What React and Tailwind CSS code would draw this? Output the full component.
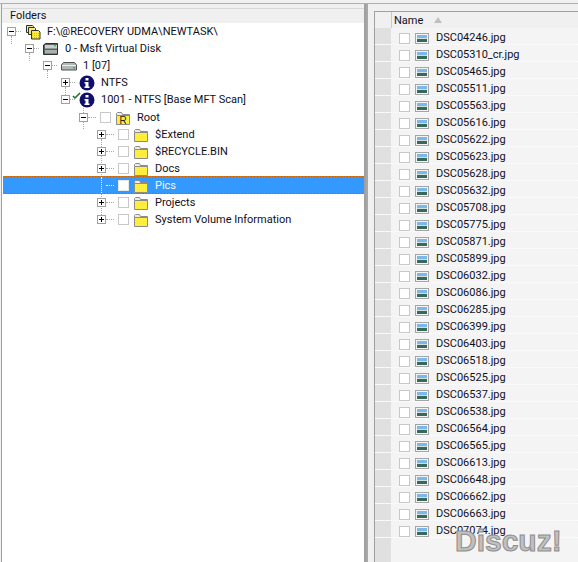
const files = [
  'DSC04246.jpg', 'DSC05310_cr.jpg', 'DSC05465.jpg', 'DSC05511.jpg', 'DSC05563.jpg', 'DSC05616.jpg',
  'DSC05622.jpg', 'DSC05623.jpg', 'DSC05628.jpg', 'DSC05632.jpg', 'DSC05708.jpg', 'DSC05775.jpg',
  'DSC05871.jpg', 'DSC05899.jpg', 'DSC06032.jpg', 'DSC06086.jpg', 'DSC06285.jpg', 'DSC06399.jpg',
  'DSC06403.jpg', 'DSC06518.jpg', 'DSC06525.jpg', 'DSC06537.jpg', 'DSC06538.jpg', 'DSC06564.jpg',
  'DSC06565.jpg', 'DSC06613.jpg', 'DSC06648.jpg', 'DSC06662.jpg', 'DSC06663.jpg', 'DSC07074.jpg',
]

function Expander({ open, none }) {
  if (none) return <span className="w-[9px] h-[9px] shrink-0" />
  return (
    <span className="relative w-[9px] h-[9px] shrink-0 border border-[#a0a0a0] bg-white">
      <span className="absolute left-[1px] top-[3px] w-[5px] h-px bg-black" />
      {!open && <span className="absolute left-[3px] top-[1px] w-px h-[5px] bg-black" />}
    </span>
  )
}

function Check({ selected }) {
  return <span className={`w-[11px] h-[11px] shrink-0 border bg-white ${selected ? 'border-[#e8e8e8]' : 'border-[#c8c8c8]'}`} />
}

function Folder({ letter }) {
  return (
    <svg width="16" height="16" viewBox="0 0 16 16" className="shrink-0">
      <path d="M1.500 5.500V3.500L2.500 2.500H6.500L7.500 4.500H14.500V14.500H1.500Z" fill="#ececec" stroke="#8c8c84" />
      <rect x="2" y="6" width="12" height="8" fill="#fff040" />
      <path d="M2 7.500h12M2 9.500h12M2 11.500h12M2 13.500h12" stroke="#e8e090" strokeDasharray="1 1" />
      <path d="M2 5.500h12" stroke="#8c8c84" />
      {letter && <text x="8" y="13.500" textAnchor="middle" fontSize="10" fontFamily="Liberation Sans" fill="#222">R</text>}
    </svg>
  )
}

function InfoIcon() {
  return (
    <svg width="16" height="16" viewBox="0 0 16 16" className="shrink-0">
      <circle cx="8" cy="8" r="7.500" fill="#10106c" />
      <rect x="6.500" y="3" width="3" height="2.500" fill="#fff" />
      <path d="M5.500 7h4v4.500h1V13h-5v-1.500h1V8.500h-1z" fill="#fff" />
    </svg>
  )
}

function ThumbIcon() {
  return (
    <svg width="14" height="11" viewBox="0 0 14 11" className="shrink-0">
      <rect x="0.500" y="0.500" width="13" height="10" fill="#f4f4f4" stroke="#a4a4a4" />
      <rect x="2" y="2" width="10" height="3" fill="#7ab8ec" />
      <rect x="2" y="5" width="10" height="1" fill="#d0e0dc" />
      <rect x="2" y="6" width="10" height="3" fill="#38685a" />
    </svg>
  )
}

function VolumesIcon() {
  return (
    <svg width="16" height="16" viewBox="0 0 16 16" className="shrink-0">
      <path d="M1.500 1.500h6l1 1v6h-7z" fill="#f4e8a0" stroke="#303030" />
      <path d="M3.500 3.500h6l1 1v6h-7z" fill="#f8e880" stroke="#303030" />
      <path d="M6.500 6.500h7l1.500 1.500v7H6.500z" fill="#ffee40" stroke="#303030" />
      <path d="M7 9.500h7M7 11.500h7M7 13.500h7" stroke="#c8b840" strokeDasharray="1 1" />
    </svg>
  )
}

function DiskIcon() {
  return (
    <svg width="16" height="16" viewBox="0 0 16 16" className="shrink-0">
      <path d="M2.500 2.500h12v11H.5V4z" fill="#5c6464" stroke="#303030" />
      <rect x="2" y="4" width="12" height="3.500" fill="#c8d0d0" />
      <rect x="2" y="9" width="12" height="3.500" fill="#a8b0b0" />
      <rect x="11" y="4" width="2" height="1.500" fill="#30d040" />
    </svg>
  )
}

function PartitionIcon() {
  return (
    <svg width="16" height="16" viewBox="0 0 16 16" className="shrink-0">
      <path d="M2.500 4.500h11l2 2.500v5H.5V7z" fill="#b0b8b8" stroke="#505050" />
      <rect x="1" y="7" width="14" height="1" fill="#e8f0f0" />
      <rect x="12" y="9" width="2" height="1.500" fill="#30c040" />
    </svg>
  )
}

function TreeRow({ indent, expander, open, check, selected, icon, label }) {
  return (
    <div className={`flex items-center h-[17px] ${indent}`}>
      <Expander open={open} none={expander === false} />
      <span className={`${check ? 'w-[8px]' : 'w-[5px]'} mr-[4px] h-0 border-t border-dotted ${selected ? 'border-white' : 'border-[#a8a8a8]'}`} />
      {check && <Check selected={selected} />}
      {check && <span className="w-[4px]" />}
      {icon}
      <span className={`ml-[6px] pt-[2px] whitespace-nowrap ${selected ? 'text-[#f4f4f4]' : 'text-[#10101c]'}`}>{label}</span>
    </div>
  )
}

function FileRow({ name }) {
  return (
    <div className="flex h-[17px] border-b border-dotted border-white">
      <span className="w-[16px] shrink-0 bg-[#e0e0e0]" />
      <span className="ml-[8px] mt-[5px] w-[11px] h-[11px] shrink-0 border border-[#c8c8c8] bg-white" />
      <span className="ml-[5px] mt-[5px]"><ThumbIcon /></span>
      <span className="ml-[7px] leading-[20px] whitespace-nowrap text-[#10101c]">{name}</span>
    </div>
  )
}

export default function App() {
  return (
    <div className="relative w-[578px] h-[562px] overflow-hidden bg-[#f0f0f0] flex text-[11px] [font-family:Roboto,sans-serif]">
      <div className="absolute left-0 right-0 top-[3px] h-px bg-[#b0b0b0]" />

      <div className="ml-[1px] mt-[4px] w-[365px] shrink-0 border-l border-r-2 border-[#a0a0a0] pt-[4px] flex flex-col">
        <div className="flex-1 border-t border-[#d8d8d8] bg-white flex flex-col">
          <div className="h-[14px] bg-[#f0f0f0] pl-[8px] leading-[13px] text-[#10101c]">Folders</div>
          <div className="relative flex-1">
            <div className="absolute left-[9px] top-[13px] h-[8px] border-l border-dotted border-[#a8a8a8]" />
            <div className="absolute left-[27px] top-[30px] h-[8px] border-l border-dotted border-[#a8a8a8]" />
            <div className="absolute left-[45px] top-[47px] h-[8px] border-l border-dotted border-[#a8a8a8]" />
            <div className="absolute left-[63px] top-[64px] h-[8px] border-l border-dotted border-[#a8a8a8]" />
            <div className="absolute left-[81px] top-[81px] h-[25px] border-l border-dotted border-[#a8a8a8]" />
            <div className="absolute left-[99px] top-[116px] h-[80px] border-l border-dotted border-[#a8a8a8]" />
            <TreeRow indent="pl-[5px]" open icon={<VolumesIcon />} label="F:\@RECOVERY UDMA\NEWTASK\" />
            <TreeRow indent="pl-[23px]" open icon={<DiskIcon />} label="0 - Msft Virtual Disk" />
            <TreeRow indent="pl-[41px]" open icon={<PartitionIcon />} label="1 [07]" />
            <TreeRow indent="pl-[59px]" icon={<InfoIcon />} label="NTFS" />
            <div className="relative mb-[1px]">
              <TreeRow indent="pl-[59px]" open icon={<InfoIcon />} label="1001 - NTFS [Base MFT Scan]" />
              <svg width="9" height="8" viewBox="0 0 9 8" className="absolute left-[70px] top-[1px]">
                <path d="M1 4l2 2 5-5" fill="none" stroke="#187018" strokeWidth="1.500" />
              </svg>
            </div>
            <TreeRow indent="pl-[77px]" open check icon={<Folder letter />} label="Root" />
            <TreeRow indent="pl-[95px]" check icon={<Folder />} label="$Extend" />
            <TreeRow indent="pl-[95px]" check icon={<Folder />} label="$RECYCLE.BIN" />
            <TreeRow indent="pl-[95px]" check icon={<Folder />} label="Docs" />
            <div className="relative z-10 ml-[1px] -mt-[1px] bg-[#3399ff] flex flex-col">
              <div className="h-px shrink-0 bg-[repeating-linear-gradient(90deg,#e0700a_0_2px,#a06840_2px_3px)]" />
              <div className="relative h-[16px]">
                <div className="absolute left-[98px] top-0 h-full border-l border-dotted border-white" />
                <TreeRow indent="pl-[94px]" expander={false} check selected icon={<Folder />} label="Pics" />
              </div>
              <div className="h-px shrink-0 bg-[repeating-linear-gradient(90deg,#e0700a_0_2px,#a06840_2px_3px)]" />
            </div>
            <TreeRow indent="pl-[95px]" check icon={<Folder />} label="Projects" />
            <TreeRow indent="pl-[95px]" check icon={<Folder />} label="System Volume Information" />
          </div>
        </div>
      </div>

      <div className="mt-[4px] w-[2px] bg-[#a8a8a8]" />
      <div className="ml-[6px] mt-[11px] flex-1 bg-[#f4f4f4] border-l border-t border-[#a0a0a0] flex flex-col relative">
        <div className="flex h-[16px] bg-[#f0f0f0]">
          <span className="w-[17px] border-r border-[#c8c8c8]" />
          <span className="pl-[2px] leading-[17px] text-[#10101c]">Name</span>
          <svg width="8" height="6" viewBox="0 0 8 6" className="ml-[11px] mt-[5px]"><path d="M4 0L8 6H0z" fill="#c0c0c0" /></svg>
        </div>
        {files.map((f) => <FileRow key={f} name={f} />)}
        <div className="flex-1 flex"><span className="w-[16px] bg-[#e0e0e0]" /></div>
      </div>

      <div className="absolute left-[455px] top-[518px] text-[30px] font-bold [font-family:'Liberation_Sans',sans-serif] text-[#c0c0c0] [-webkit-text-stroke:1px_#8e8e8e]">Discuz!</div>
    </div>
  )
}
